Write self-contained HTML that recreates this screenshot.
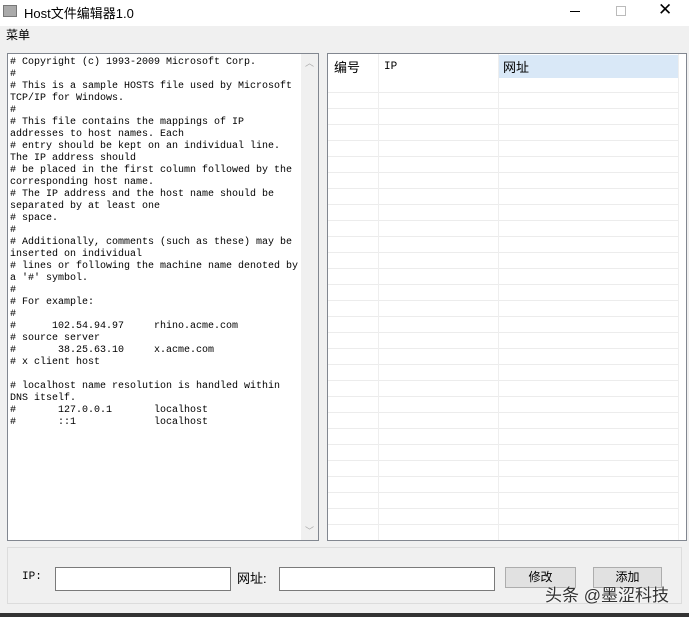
<!DOCTYPE html><html><head><meta charset="utf-8"><style>
*{margin:0;padding:0;box-sizing:border-box}
body{width:689px;height:617px;background:#f0f0f0;position:relative;overflow:hidden;font-family:"Liberation Sans","Noto Sans CJK SC",sans-serif;font-size:12px;color:#000}
.a{position:absolute}
pre{font-family:"Liberation Mono","Noto Sans CJK SC",monospace;font-size:10px;line-height:12px;white-space:pre}
</style></head><body>
<div class="a" style="left:0;top:0;width:689px;height:26px;background:#fff"></div>
<div class="a" style="left:3px;top:5px;width:14px;height:12px;border:1px solid #777;background:#aaa"></div>
<div class="a" style="left:24px;top:3px;font-size:13px">Host文件编辑器1.0</div>
<div class="a" style="left:570px;top:11px;width:10px;height:1px;background:#000"></div>
<div class="a" style="left:616px;top:6px;width:10px;height:10px;border:1px solid #bbb"></div>
<div class="a" style="left:658px;top:0px;font-size:17px;font-weight:300">✕</div>
<div class="a" style="left:6px;top:26px;font-size:12px">菜单</div>
<div class="a" style="left:0;top:43px;width:689px;height:574px;background:#f0f0f0"></div>
<div class="a" style="left:7px;top:53px;width:312px;height:488px;background:#fff;border:1px solid #828790"></div>
<div class="a" style="left:301px;top:54px;width:17px;height:486px;background:#f0f0f0"></div>
<div class="a" style="left:305px;top:56px;color:#aaa;font-size:9px">︿</div>
<div class="a" style="left:305px;top:524px;color:#aaa;font-size:9px">﹀</div>
<pre class="a" style="left:10px;top:57px"># Copyright (c) 1993-2009 Microsoft Corp.
#
# This is a sample HOSTS file used by Microsoft
TCP/IP for Windows.
#
# This file contains the mappings of IP
addresses to host names. Each
# entry should be kept on an individual line.
The IP address should
# be placed in the first column followed by the
corresponding host name.
# The IP address and the host name should be
separated by at least one
# space.
#
# Additionally, comments (such as these) may be
inserted on individual
# lines or following the machine name denoted by
a '#' symbol.
#
# For example:
#
#      102.54.94.97     rhino.acme.com
# source server
#       38.25.63.10     x.acme.com
# x client host

# localhost name resolution is handled within
DNS itself.
#       127.0.0.1       localhost
#       ::1             localhost</pre>
<div class="a" style="left:327px;top:53px;width:360px;height:488px;background:#fff;border:1px solid #828790;
background-image:repeating-linear-gradient(to bottom,transparent 0,transparent 15px,#ececec 15px,#ececec 16px);background-position:0 23px;background-repeat:repeat-y;background-size:350px 100%"></div>
<div class="a" style="left:328px;top:54px;width:350px;height:24px;background:#fff"></div>
<div class="a" style="left:498px;top:55px;width:180px;height:23px;background:#d9e8f7"></div>
<div class="a" style="left:378px;top:54px;width:1px;height:486px;background:#eee"></div>
<div class="a" style="left:498px;top:54px;width:1px;height:486px;background:#eee"></div>
<div class="a" style="left:678px;top:54px;width:1px;height:486px;background:#eee"></div>
<div class="a" style="left:334px;top:57px;font-size:13px">编号</div>
<pre class="a" style="left:384px;top:61px;font-size:11px">IP</pre>
<div class="a" style="left:503px;top:57px;font-size:13px">网址</div>
<div class="a" style="left:7px;top:547px;width:675px;height:57px;border:1px solid #dcdcdc"></div>
<pre class="a" style="left:22px;top:571px;font-size:11px">IP:</pre>
<div class="a" style="left:55px;top:567px;width:176px;height:24px;background:#fff;border:1px solid #7a7a7a"></div>
<div class="a" style="left:237px;top:568px;font-size:13px">网址:</div>
<div class="a" style="left:279px;top:567px;width:216px;height:24px;background:#fff;border:1px solid #7a7a7a"></div>
<div class="a" style="left:505px;top:567px;width:71px;height:21px;background:#e1e1e1;border:1px solid #adadad;text-align:center;font-size:12px;line-height:19px">修改</div>
<div class="a" style="left:593px;top:567px;width:69px;height:21px;background:#e1e1e1;border:1px solid #adadad;text-align:center;font-size:12px;line-height:19px">添加</div>
<div class="a" style="left:545px;top:581px;font-size:17px;color:#333;text-shadow:0 0 2px #fff">头条 @墨涩科技</div>
<div class="a" style="left:0;top:613px;width:689px;height:4px;background:#333"></div>
</body></html>
